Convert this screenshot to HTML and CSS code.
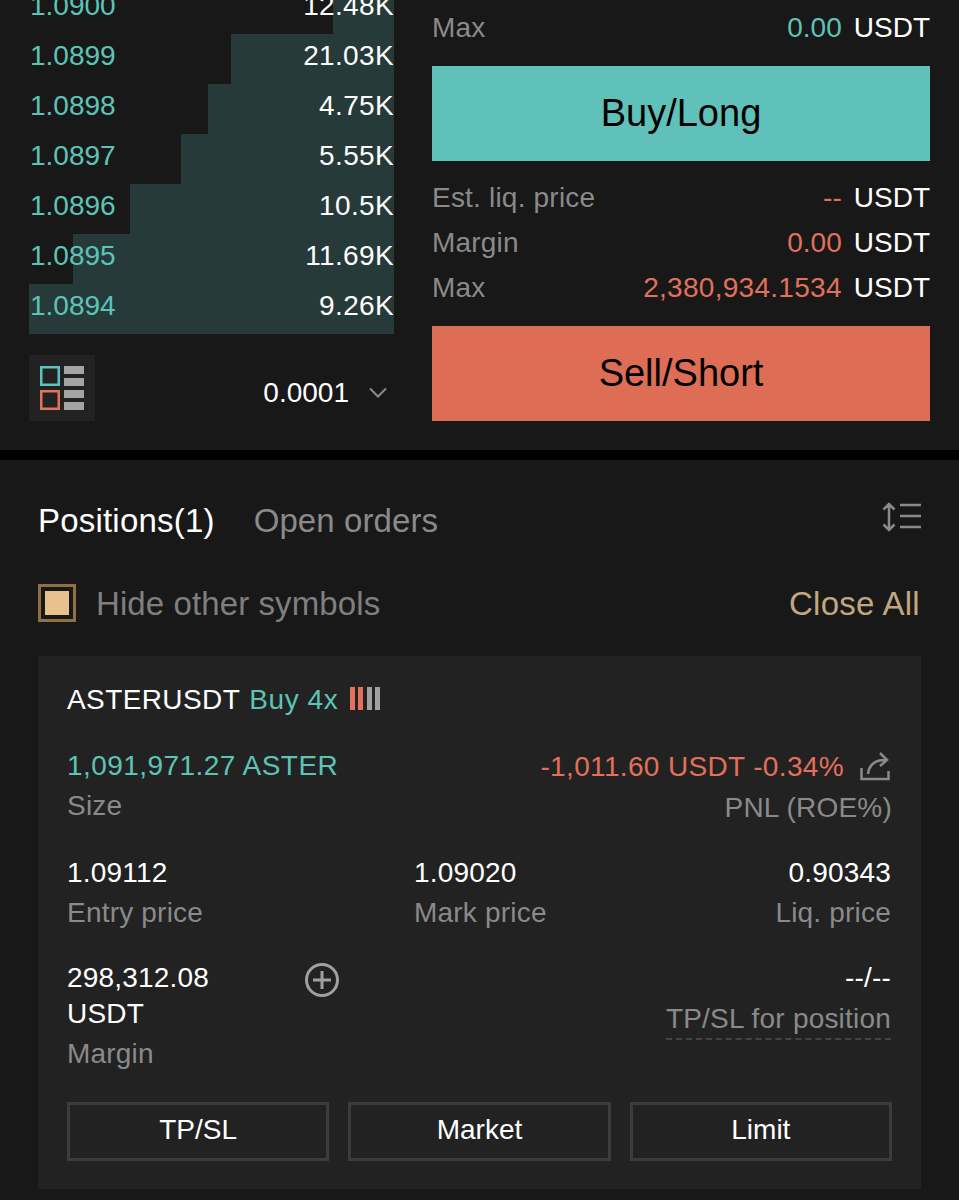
FILE: index.html
```html
<!DOCTYPE html>
<html lang="en">
<head>
  <meta charset="UTF-8" />
  <meta name="viewport" content="width=device-width, initial-scale=1.0"/>
  <title>ASTERUSDT Positions</title>
  <link rel="stylesheet" href="styles.css">
</head>
<body>
  <section class="trade">
    <div class="book">
      <div class="book-rows">
        <div class="book-row"><span class="depth" style="width:61px"></span><span class="price">1.0900</span><span class="qty">12.48K</span></div>
        <div class="book-row"><span class="depth" style="width:163px"></span><span class="price">1.0899</span><span class="qty">21.03K</span></div>
        <div class="book-row"><span class="depth" style="width:186px"></span><span class="price">1.0898</span><span class="qty">4.75K</span></div>
        <div class="book-row"><span class="depth" style="width:213px"></span><span class="price">1.0897</span><span class="qty">5.55K</span></div>
        <div class="book-row"><span class="depth" style="width:264px"></span><span class="price">1.0896</span><span class="qty">10.5K</span></div>
        <div class="book-row"><span class="depth" style="width:321px"></span><span class="price">1.0895</span><span class="qty">11.69K</span></div>
        <div class="book-row"><span class="depth" style="width:365px"></span><span class="price">1.0894</span><span class="qty">9.26K</span></div>
      </div>
      <div class="book-foot">
        <div class="layout-btn">
          <svg width="44" height="44" viewBox="0 0 44 44">
            <rect x="1.250" y="1.250" width="17.500" height="17.500" fill="none" stroke="#5cc4ba" stroke-width="2.500"/>
            <rect x="1.250" y="25.250" width="17.500" height="17.500" fill="none" stroke="#e0745a" stroke-width="2.500"/>
            <rect x="24" y="0" width="20" height="8" fill="#a3a3a3"/>
            <rect x="24" y="12" width="20" height="8" fill="#a3a3a3"/>
            <rect x="24" y="24" width="20" height="8" fill="#a3a3a3"/>
            <rect x="24" y="36" width="20" height="8" fill="#a3a3a3"/>
          </svg>
        </div>
        <div class="tick">
          <span>0.0001</span>
          <svg width="20" height="14" viewBox="0 0 20 14"><path d="M2 2.500L10 10.500L18 2.500" fill="none" stroke="#8a8a8a" stroke-width="2"/></svg>
        </div>
      </div>
    </div>

    <div class="order">
      <div class="order-row first"><span class="label">Max</span><span class="unit"><span class="num teal">0.00</span>USDT</span></div>
      <button class="big-btn buy">Buy/Long</button>
      <div class="order-row gap-top"><span class="label">Est. liq. price</span><span class="unit"><span class="num red">--</span>USDT</span></div>
      <div class="order-row"><span class="label">Margin</span><span class="unit"><span class="num red">0.00</span>USDT</span></div>
      <div class="order-row"><span class="label">Max</span><span class="unit"><span class="num long red">2,380,934.1534</span>USDT</span></div>
      <button class="big-btn sell">Sell/Short</button>
    </div>
  </section>

  <section class="positions">
    <div class="tabs">
      <span class="tab active">Positions(1)</span>
      <span class="tab">Open orders</span>
      <svg class="sort-icon" width="40" height="32" viewBox="0 0 40 32">
        <path d="M8 3V29M2.500 8.500L8 3L13.500 8.500M2.500 23.500L8 29L13.500 23.500" fill="none" stroke="#8a8a8a" stroke-width="2.500"/>
        <path d="M19 4H40M19 15H40M19 26H40" fill="none" stroke="#8a8a8a" stroke-width="2.500"/>
      </svg>
    </div>

    <div class="filter">
      <span class="check"><span class="check-fill"></span></span>
      <span class="filter-label">Hide other symbols</span>
      <span class="close-all">Close All</span>
    </div>

    <div class="card">
      <div class="card-title">
        <span class="symbol">ASTERUSDT</span>
        <span class="side teal">Buy 4x</span>
        <span class="adl"><i class="on"></i><i class="on"></i><i></i><i></i></span>
      </div>

      <div class="size-row">
        <div>
          <div class="value size-value teal">1,091,971.27 ASTER</div>
          <div class="label sub">Size</div>
        </div>
        <div class="pnl">
          <div class="value red pnl-value">
            <span>-1,011.60 USDT -0.34%</span>
            <svg width="30" height="30" viewBox="0 0 30 30">
              <path d="M1.500 16V27H28.500V19" fill="none" stroke="#8a8a8a" stroke-width="2.500"/>
              <path d="M8 22C9 13 14 8 25 8M20 1L27 8L20 14" fill="none" stroke="#8a8a8a" stroke-width="2.500"/>
            </svg>
          </div>
          <div class="label pnl-label">PNL (ROE%)</div>
        </div>
      </div>

      <div class="stats">
        <div>
          <div class="value">1.09112</div>
          <div class="label sub">Entry price</div>
        </div>
        <div>
          <div class="value">1.09020</div>
          <div class="label sub">Mark price</div>
        </div>
        <div class="right">
          <div class="value">0.90343</div>
          <div class="label sub">Liq. price</div>
        </div>
      </div>

      <div class="stats">
        <div class="margin">
          <div>
            <div class="value">298,312.08<br>USDT</div>
            <div class="label sub">Margin</div>
          </div>
          <svg class="plus" width="34" height="34" viewBox="0 0 34 34">
            <circle cx="17" cy="17" r="15.500" fill="none" stroke="#a0a0a0" stroke-width="3"/>
            <path d="M17 8V26M8 17H26" fill="none" stroke="#a0a0a0" stroke-width="3"/>
          </svg>
        </div>
        <div></div>
        <div class="right">
          <div class="value">--/--</div>
          <div class="label dashed">TP/SL for position</div>
        </div>
      </div>

      <div class="actions">
        <button class="act-btn">TP/SL</button>
        <button class="act-btn">Market</button>
        <button class="act-btn">Limit</button>
      </div>
    </div>
  </section>
</body>
</html>
```

FILE: styles.css
```css
* {
  box-sizing: border-box;
}
body {
  margin: 0;
  height: 1200px;
  overflow: hidden;
  background: #181818;
  color: #fff;
  font-family: 'Liberation Sans', Arial, sans-serif;
  font-size: 28px;
  letter-spacing: 0.2px;
}
.teal {
  color: #5cc4b7;
}
.red {
  color: #e2705a;
}
.label {
  color: #8a8a8a;
}

/* order book + order form */
.trade {
  height: 450px;
  padding: 0 29px;
  display: flex;
  gap: 38px;
  overflow: hidden;
}
.book {
  width: 365px;
  flex: none;
}
.book-rows {
  margin-top: -16px;
}
.book-row {
  position: relative;
  height: 50px;
  display: flex;
  align-items: center;
  justify-content: space-between;
  padding-left: 1px;
  padding-bottom: 6px;
}
.depth {
  position: absolute;
  top: 0;
  right: 0;
  bottom: 0;
  background: #263a39;
}
.price {
  position: relative;
  color: #5cc4b7;
  letter-spacing: 0;
}
.qty {
  position: relative;
  letter-spacing: 0.35px;
}
.book-foot {
  margin-top: 21px;
  display: flex;
  align-items: center;
  justify-content: space-between;
}
.layout-btn {
  width: 66px;
  height: 66px;
  background: #222222;
  display: flex;
  align-items: center;
  justify-content: center;
}
.tick {
  display: flex;
  align-items: center;
  gap: 19px;
  padding-right: 6px;
  margin-top: 9px;
  letter-spacing: 0;
}

.order {
  flex: 1;
}
.order-row {
  height: 45px;
  display: flex;
  align-items: center;
  justify-content: space-between;
}
.order-row.first {
  margin-top: 5px;
}
.order-row.gap-top {
  margin-top: 14px;
}
.unit {
  letter-spacing: 0;
}
.num {
  margin-right: 12px;
}
.num.long {
  letter-spacing: 0.28px;
}
.big-btn {
  display: block;
  width: 100%;
  height: 95px;
  border: none;
  color: #000;
  font-family: inherit;
  font-size: 38px;
}
.big-btn.buy {
  background: #5fc1b9;
  margin-top: 16px;
}
.big-btn.sell {
  background: #dd6e55;
  margin-top: 16px;
}

/* positions */
.positions {
  border-top: 10px solid #000;
  padding: 40px 38px 0;
}
.tabs {
  height: 40px;
  display: flex;
  align-items: center;
  gap: 39px;
  font-size: 33px;
}
.tab {
  color: #8a8a8a;
  padding-top: 2px;
  letter-spacing: 0.1px;
}
.tab.active {
  color: #fff;
  letter-spacing: 0.2px;
}
.sort-icon {
  margin-left: auto;
  margin-top: -6px;
}
.filter {
  margin-top: 44px;
  height: 38px;
  display: flex;
  align-items: center;
  font-size: 33px;
}
.check {
  width: 38px;
  height: 38px;
  border: 3px solid #8f6f45;
  padding: 4px;
  margin-right: 20px;
}
.check-fill {
  display: block;
  width: 100%;
  height: 100%;
  background: #e8c18e;
}
.filter-label {
  color: #7f7f7f;
  padding-top: 2px;
  letter-spacing: 0.1px;
}
.close-all {
  margin-left: auto;
  margin-right: 1px;
  padding-top: 2px;
  color: #c2a67f;
  letter-spacing: 0.3px;
}

.card {
  margin-top: 34px;
  width: 883px;
  background: #222222;
  padding: 26px 29px 28px;
}
.card-title {
  height: 36px;
  display: flex;
  align-items: center;
  gap: 9px;
}
.symbol {
  letter-spacing: 0.4px;
}
.side {
  letter-spacing: 0.6px;
}
.adl {
  display: flex;
  gap: 3px;
  margin-top: -4px;
  margin-left: 3px;
}
.adl i {
  width: 5px;
  height: 23px;
  background: #a0a0a0;
}
.adl i.on {
  background: #e2705a;
}
.adl i.on + i:not(.on) {
  margin-left: 1px;
}
.value {
  line-height: 36px;
}
.sub {
  line-height: 36px;
  margin-top: 4px;
}
.size-row {
  margin-top: 30px;
  display: flex;
  justify-content: space-between;
}
.size-value {
  letter-spacing: 0.45px;
}
.pnl {
  text-align: right;
  padding-top: 1px;
}
.pnl-value {
  display: flex;
  align-items: center;
  gap: 16px;
  letter-spacing: 0.35px;
  padding-right: 2px;
}
.pnl-label {
  line-height: 36px;
  margin-top: 5px;
}
.stats {
  margin-top: 29px;
  display: grid;
  grid-template-columns: 347px 1fr auto;
}
.right {
  text-align: right;
  padding-right: 1px;
}
.margin {
  display: flex;
  justify-content: space-between;
  width: 272px;
}
.plus {
  margin-top: 3px;
}
.dashed {
  line-height: 36px;
  margin-top: 5px;
  padding-bottom: 1px;
  border-bottom: 2px dashed #444444;
}
.actions {
  margin-top: 30px;
  display: grid;
  grid-template-columns: repeat(3, 1fr);
  gap: 19px;
}
.act-btn {
  height: 59px;
  padding-bottom: 4px;
  background: none;
  border: 3px solid #3c3c3c;
  color: #fff;
  font-family: inherit;
  font-size: 28px;
}
```
